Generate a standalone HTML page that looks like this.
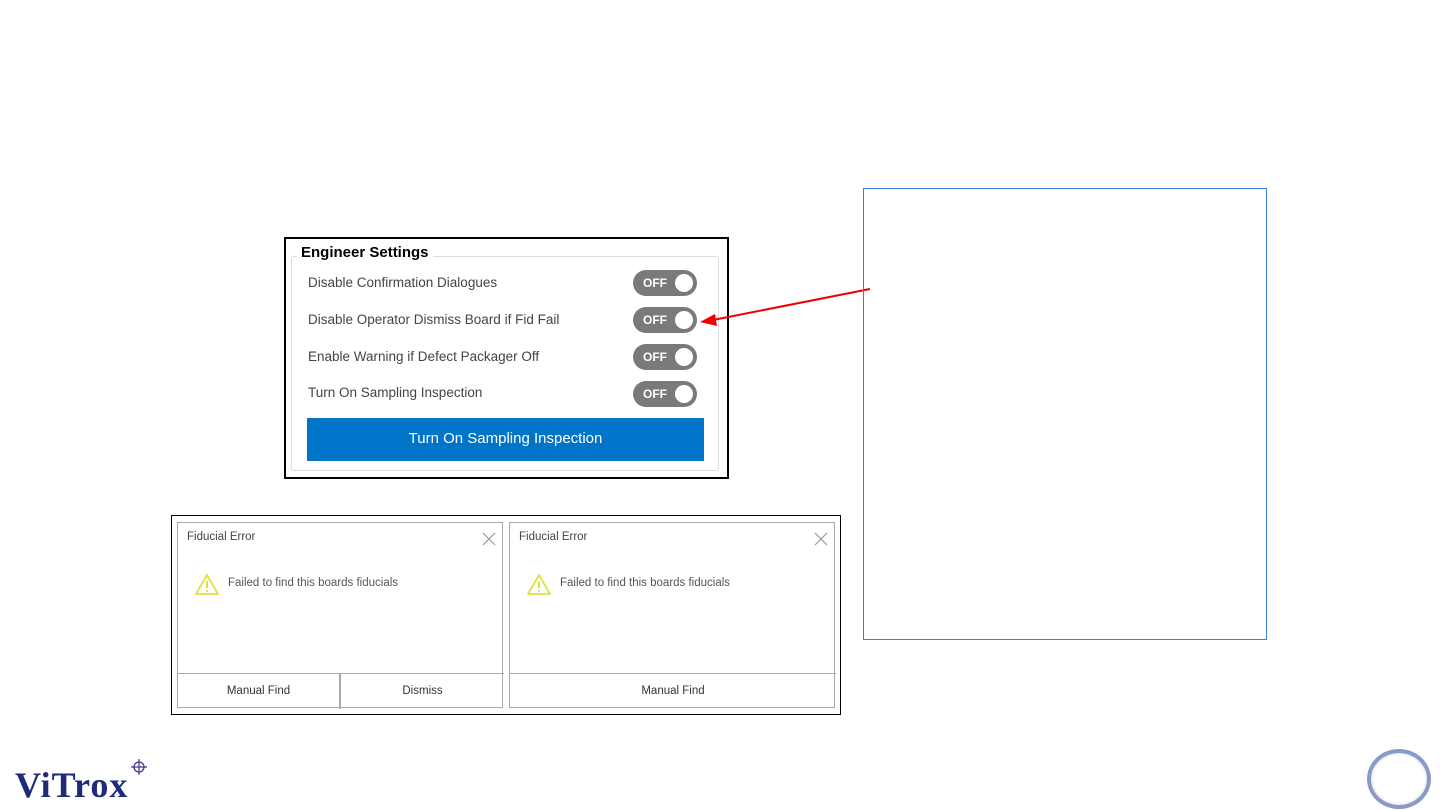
<!DOCTYPE html>
<html><head><meta charset="utf-8"><style>
*{box-sizing:border-box;margin:0;padding:0}
body{width:1440px;height:810px;background:#fff;position:relative;overflow:hidden;font-family:"Liberation Sans",sans-serif}
.abs{position:absolute}
.row{position:absolute;left:308px;font-size:13.5px;color:#444}
.tog{position:absolute;left:633px;width:64px;height:26px;border-radius:13px;background:#7a7a7a}
.tog span{position:absolute;left:10px;top:6px;color:#fff;font-size:12px;font-weight:bold}
.tog i{position:absolute;right:4px;top:4px;width:18px;height:18px;border-radius:50%;background:#fff}
.dlg{position:absolute;top:522px;width:326px;height:186px;border:1px solid #aaa;background:#fff}
.dlg .t{position:absolute;left:9px;top:8px;font-size:11.5px;color:#444}
.dlg .m{position:absolute;left:50px;top:54px;font-size:11.5px;color:#555}
.dlg .b{position:absolute;top:150px;height:36px;border-top:1px solid #aaa;font-size:11.5px;color:#333;text-align:center;line-height:34px}
</style></head><body>
<div class="abs" style="left:284px;top:237px;width:445px;height:242px;border:2px solid #000"></div>
<div class="abs" style="left:291px;top:256px;width:428px;height:215px;border:1px solid #ddd;border-radius:3px"></div>
<div class="abs" style="left:297px;top:244px;background:#fff;padding:0 4px;font-size:15px;font-weight:bold;color:#000">Engineer Settings</div>
<div class="row" style="top:275px">Disable Confirmation Dialogues</div>
<div class="row" style="top:312px">Disable Operator Dismiss Board if Fid Fail</div>
<div class="row" style="top:349px">Enable Warning if Defect Packager Off</div>
<div class="row" style="top:385px">Turn On Sampling Inspection</div>
<div class="tog" style="top:270px"><span>OFF</span><i></i></div>
<div class="tog" style="top:307px"><span>OFF</span><i></i></div>
<div class="tog" style="top:344px"><span>OFF</span><i></i></div>
<div class="tog" style="top:381px"><span>OFF</span><i></i></div>
<div class="abs" style="left:307px;top:418px;width:397px;height:43px;background:#0074c8;color:#fff;font-size:15px;text-align:center;line-height:42px">Turn On Sampling Inspection</div>
<svg class="abs" style="left:695px;top:285px" width="180" height="45"><line x1="175" y1="4" x2="18" y2="35" stroke="#e00" stroke-width="2"/><polygon points="5,37 20,29 22,41" fill="#e00"/></svg>
<div class="abs" style="left:863px;top:188px;width:404px;height:452px;border:1px solid #3b7ddd"></div>
<div class="abs" style="left:171px;top:515px;width:670px;height:200px;border:1px solid #000"></div>
<div class="dlg" style="left:177px">
<div class="t">Fiducial Error</div>
<svg class="abs" style="left:304px;top:9px" width="14" height="14"><path d="M1 1L13 13M13 1L1 13" stroke="#999" stroke-width="1.2"/></svg>
<svg class="abs" style="left:17px;top:50px" width="24" height="22"><path d="M12 2L23 21H1Z" fill="none" stroke="#e0e040" stroke-width="1.8" stroke-linejoin="round"/><path d="M12 8V15" stroke="#e0e040" stroke-width="2"/><circle cx="12" cy="18" r="1.1" fill="#e0e040"/></svg>
<div class="m">Failed to find this boards fiducials</div>
<div class="b" style="left:0;width:163px;border-right:2px solid #aaa">Manual Find</div>
<div class="b" style="left:163px;width:163px">Dismiss</div>
</div>
<div class="dlg" style="left:509px">
<div class="t">Fiducial Error</div>
<svg class="abs" style="left:304px;top:9px" width="14" height="14"><path d="M1 1L13 13M13 1L1 13" stroke="#999" stroke-width="1.2"/></svg>
<svg class="abs" style="left:17px;top:50px" width="24" height="22"><path d="M12 2L23 21H1Z" fill="none" stroke="#e0e040" stroke-width="1.8" stroke-linejoin="round"/><path d="M12 8V15" stroke="#e0e040" stroke-width="2"/><circle cx="12" cy="18" r="1.1" fill="#e0e040"/></svg>
<div class="m">Failed to find this boards fiducials</div>
<div class="b" style="left:0;width:326px">Manual Find</div>
</div>
<div class="abs" style="left:15px;top:767px;font-family:'Liberation Serif',serif;font-weight:bold;font-size:36px;line-height:36px;color:#1e2a7a;letter-spacing:1px">ViTrox</div>
<svg class="abs" style="left:130px;top:758px" width="18" height="18"><circle cx="9" cy="9" r="5" fill="none" stroke="#3a3a8a" stroke-width="1.3"/><path d="M9 1V17M1 9H17" stroke="#3a3a8a" stroke-width="1.2"/></svg>
<div class="abs" style="left:1367px;top:749px;width:64px;height:60px;border-radius:50%;border:4px solid #8a9ac8;box-shadow:inset 0 0 3px #ccd"></div>
</body></html>
